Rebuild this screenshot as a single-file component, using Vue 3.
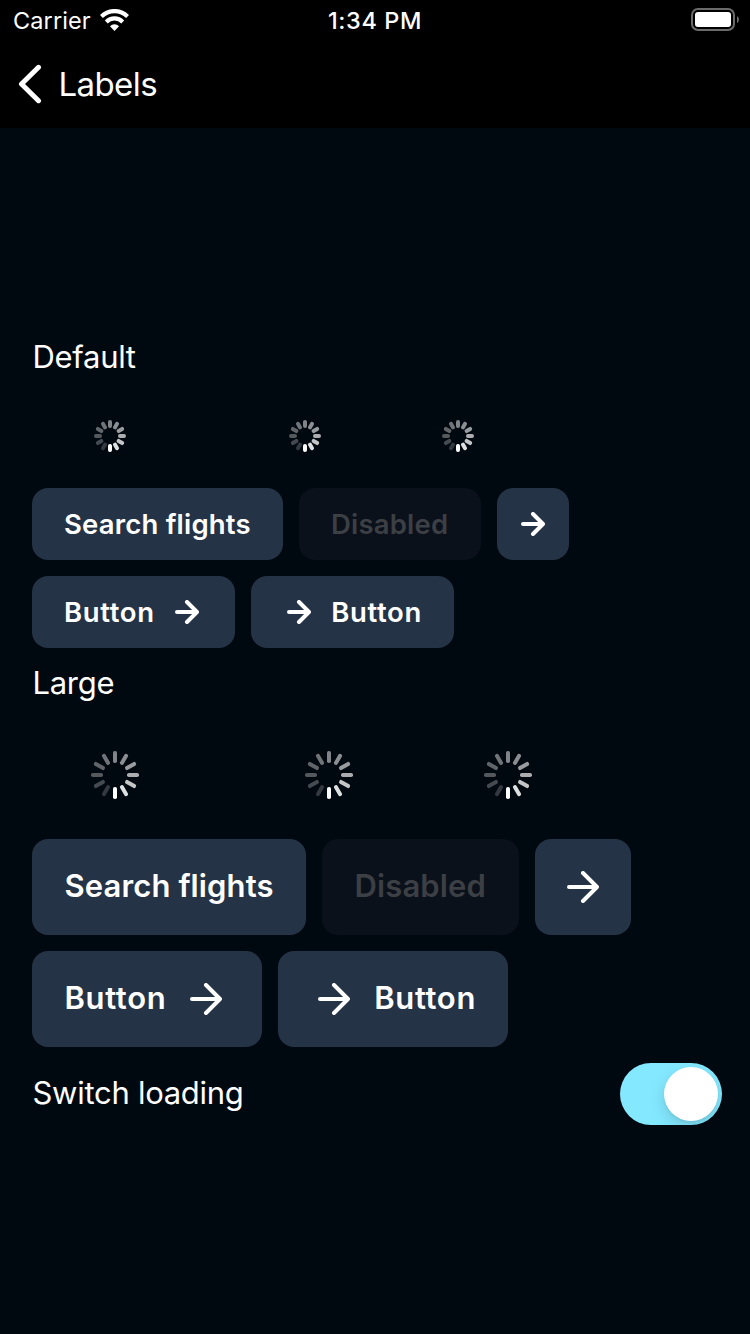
<script setup>
import { h } from 'vue'

const opacities = [0.5, 0.54, 0.6, 0.67, 0.77, 0.87, 1, 0.2, 0.27, 0.33, 0.38, 0.44]

const Spinner = ({ large }) => {
  const size = large ? 48 : 32
  const length = large ? 12 : 8
  return h('svg', { width: size, height: size, viewBox: `0 0 ${size} ${size}` },
    opacities.map((o, i) => h('rect', {
      x: size / 2 - 2, y: 0, width: 4, height: length, rx: large ? 1.8 : 1.9,
      fill: '#fff', opacity: o, transform: `rotate(${i * 30} ${size / 2} ${size / 2})`,
    })))
}
Spinner.props = ['large']

const Arrow = ({ large }) => {
  const size = large ? 32 : 24
  const d = large ? 'M2 16H30M16 2L30 16L16 30' : 'M2 12H22M12 2L22 12L12 22'
  return h('svg', { width: size, height: size, viewBox: `0 0 ${size} ${size}` },
    [h('path', { d, fill: 'none', stroke: '#fff', 'stroke-width': 4, 'stroke-linecap': 'round', 'stroke-linejoin': 'round' })])
}
Arrow.props = ['large']

const groups = [
  { title: 'Default', large: false },
  { title: 'Large', large: true },
]
</script>

<template>
  <div class="screen">
    <header>
      <div class="status">
        <div class="carrier">
          <span class="carrier-name">Carrier</span>
          <svg class="wifi" width="29" height="22" viewBox="0 0 30 22" preserveAspectRatio="none">
            <g fill="none" stroke="#fff" stroke-width="4.2">
              <path d="M1.5 7.6A19.2 19.2 0 0 1 28.5 7.6" />
              <path d="M6.5 13A12 12 0 0 1 23.5 13" />
            </g>
            <path d="M15 22L10.3 17.2A6.8 6.8 0 0 1 19.7 17.2Z" fill="#fff" />
          </svg>
        </div>
        <span class="time">1:34 PM</span>
        <svg class="battery" width="49" height="24" viewBox="0 0 49 24">
          <rect x="1" y="1" width="42" height="21" rx="6" fill="none" stroke="#6b6b6b" stroke-width="2" />
          <rect x="4" y="4" width="36" height="15" rx="3" fill="#fff" />
          <path d="M46 8Q48 9 48 11.500Q48 14 46 15Z" fill="#6b6b6b" />
        </svg>
      </div>
      <div class="nav">
        <svg width="24" height="40" viewBox="0 0 24 40">
          <path d="M20.500 3.300L3.500 20L20.500 36.700" fill="none" stroke="#fff" stroke-width="5" stroke-linecap="round" stroke-linejoin="round" />
        </svg>
        <span class="title">Labels</span>
      </div>
    </header>

    <main>
      <section v-for="g in groups" :key="g.title" :class="{ large: g.large }">
        <h2><span>{{ g.title }}</span></h2>
        <div class="row">
          <div class="load first"><Spinner :large="g.large" /></div>
          <div class="load second"><Spinner :large="g.large" /></div>
          <div class="load square"><Spinner :large="g.large" /></div>
        </div>
        <div class="row">
          <div class="button search"><span>Search flights</span></div>
          <div class="button disabled"><span>Disabled</span></div>
          <div class="button square"><Arrow :large="g.large" /></div>
        </div>
        <div class="row">
          <div class="button combo"><span>Button</span><Arrow :large="g.large" /></div>
          <div class="button combo leading"><Arrow :large="g.large" /><span>Button</span></div>
        </div>
      </section>
      <div class="setting">
        <span class="setting-label">Switch loading</span>
        <div class="switch"><div class="knob"></div></div>
      </div>
    </main>
  </div>
</template>

<style>
body { background: #000810; }
</style>

<style scoped>
.screen {
  width: 750px; height: 1334px; overflow: hidden; box-sizing: border-box;
  background: #000810; color: #fff;
  font-family: Inter, "Liberation Sans", sans-serif;
}
svg { display: block; flex: none; }
span { white-space: nowrap; }
header { height: 128px; background: #000; }
.status {
  height: 40px; display: grid; grid-template-columns: 1fr auto 1fr; align-items: center;
  padding: 0 10px 0 13px; box-sizing: border-box;
}
.carrier { display: flex; align-items: center; gap: 10px; }
.carrier-name { width: 77px; font-size: 23.500px; letter-spacing: 0.100px; line-height: 42px; }
.wifi { margin-top: -2px; }
.time { font-size: 23.500px; font-weight: 500; letter-spacing: 0.600px; line-height: 42px; margin: 0 3px 0 0; }
.battery { justify-self: end; margin-top: -2px; }
.nav { display: flex; align-items: center; height: 88px; padding-left: 18px; gap: 16.500px; }
.title { font-size: 33px; letter-spacing: -0.600px; line-height: 40px; }
main { padding: 209px 28px 0 32px; }
h2 { margin: 0 0 25px; height: 38px; font-size: 31px; font-weight: 400; line-height: 40px; letter-spacing: -0.300px; padding-left: 0.500px; }
.row { display: flex; gap: 16px; margin-bottom: 16px; }
.button, .load {
  height: 72px; display: flex; align-items: center; justify-content: center;
  flex: none; box-sizing: border-box;
}
.button {
  border-radius: 16px; background: #253346; font-weight: 600; font-size: 27.500px;
  letter-spacing: 0.200px; padding: 0 32px; justify-content: flex-start;
}
.first { width: 156px; }
.second { width: 202px; }
.search { width: 251px; }
.disabled { width: 182px; background: #0a111b; color: #3c3f44; }
.square { width: 72px; padding: 0; justify-content: center; }
.combo { width: 203px; justify-content: space-between; padding-right: 36px; letter-spacing: 0.650px; }
.leading { padding: 0 32px 0 36px; }
.large h2 { line-height: 38px; }
.large .button, .large .load { height: 96px; }
.large .button { font-size: 31px; letter-spacing: 0.120px; }
.large .button span { margin-top: -4px; padding-left: 0.500px; }
.large .first { width: 166px; }
.large .second { width: 230px; }
.large .search { width: 274px; }
.large .disabled { width: 197px; }
.large .square { width: 96px; }
.large .combo { width: 230px; padding-right: 40px; letter-spacing: 0.650px; }
.large .leading { padding: 0 32px 0 40px; }
.setting { display: flex; align-items: center; justify-content: space-between; }
.setting-label { font-size: 31px; line-height: 40px; letter-spacing: -0.280px; margin-top: -2px; padding-left: 0.500px; }
.switch {
  width: 102px; height: 62px; border-radius: 31px; background: #84e9ff;
  box-sizing: border-box; padding: 4px; display: flex; justify-content: flex-end; overflow: hidden;
}
.knob { width: 54px; height: 54px; border-radius: 50%; background: #fff; box-shadow: 0 6px 16px rgba(0,0,0,.15), 0 2px 2px rgba(0,0,0,.05); }
</style>
